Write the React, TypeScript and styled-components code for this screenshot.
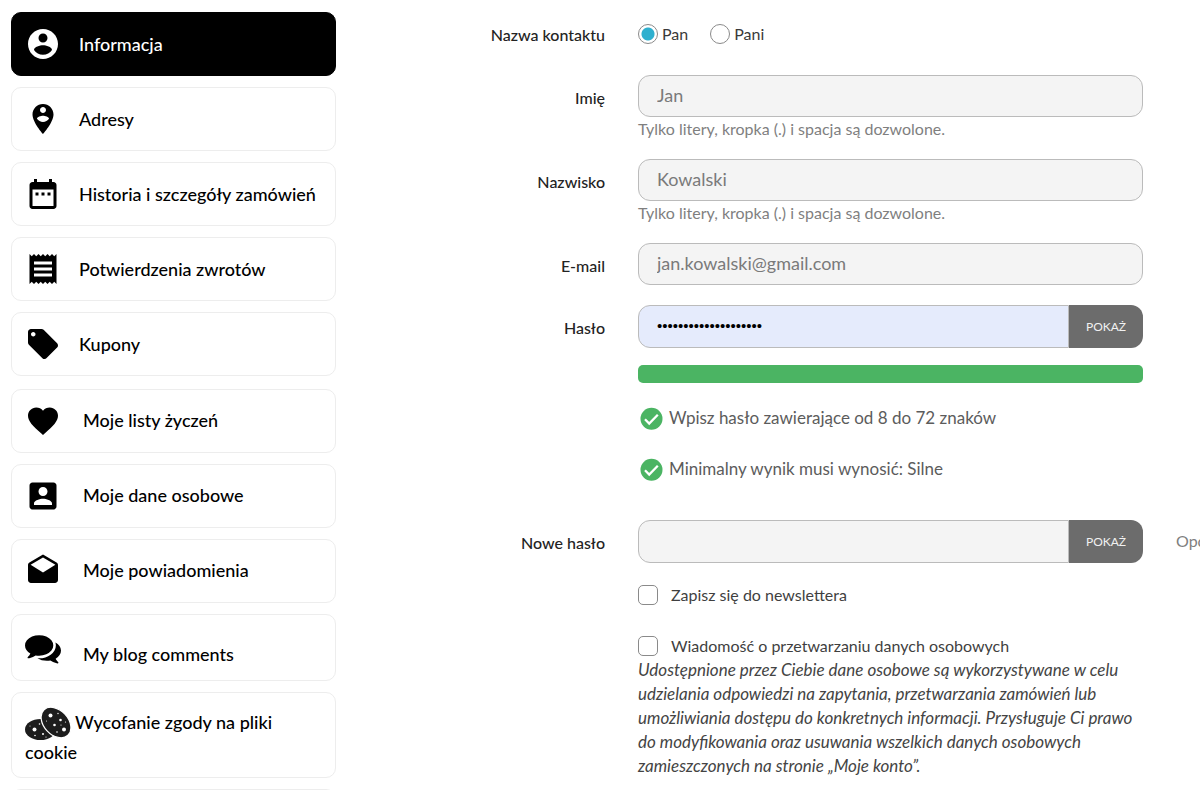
import React from 'react';
import styled, { createGlobalStyle, css } from 'styled-components';

const GlobalStyle = createGlobalStyle`
  *, *::before, *::after { box-sizing: border-box; }
  body {
    margin: 0;
    background: #fff;
    color: #333;
    font-family: Lato, "Open Sans", sans-serif;
    font-size: 16px;
    line-height: 24px;
  }
`;

const Page = styled.div`
  display: flex;
  align-items: flex-start;
  height: 100vh;
  padding-top: 12px;
  padding-left: 11px;
  overflow: hidden;
`;

/* ---------- Account navigation ---------- */

const Sidebar = styled.nav`
  flex: 0 0 325px;
  display: flex;
  flex-direction: column;
  gap: 13px;
`;

const LinkGroup = styled.ul`
  list-style: none;
  margin: 0;
  padding: 0;
  display: flex;
  flex-direction: column;
  gap: 11px;
`;

const cardLook = css<{ $active?: boolean }>`
  min-height: 64px;
  padding: 13px;
  border: 1px solid ${p => (p.$active ? '#000' : '#ededed')};
  border-radius: 10px;
  background: ${p => (p.$active ? '#000' : '#fff')};
  color: ${p => (p.$active ? '#fff' : '#000')};
  font-size: 18px;
  font-weight: 500;
  text-decoration: none;
`;

const LinkCard = styled.a<{ $active?: boolean; $gap?: number }>`
  ${cardLook}
  display: flex;
  align-items: center;
  gap: ${p => p.$gap ?? 18}px;
`;

const ModuleText = styled.span`
  padding-bottom: 3px;
`;

const CommentsCard = styled(LinkCard)`
  align-items: flex-end;
  min-height: 67px;
  padding: 14px 13px;
`;

const CookieCard = styled.a`
  ${cardLook}
  display: block;
  padding: 14px 13px 10px;
  line-height: 30px;

  svg {
    vertical-align: middle;
    margin: -4px 4px -4px 0;
  }
`;

const Icon = styled.svg`
  flex: none;
  width: 36px;
  height: 36px;
  fill: currentColor;
`;

/* ---------- Form ---------- */

const Form = styled.form`
  flex: 1;
  min-width: 0;
  padding-top: 10px;
`;

const FormRow = styled.div<{ $space?: number }>`
  display: grid;
  grid-template-columns: 269px minmax(0, 1fr) 24px;
  column-gap: 33px;
  margin-bottom: ${p => p.$space ?? 20}px;
`;

const labelLook = css`
  padding-top: 11px;
  text-align: right;
  font-weight: 500;
  color: #232323;
`;

const Label = styled.label`
  ${labelLook}
`;

const GroupLabel = styled.span`
  ${labelLook}
  padding-top: 1px;
`;

const Field = styled.div`
  grid-column: 2;
  min-width: 0;
`;

const TextInput = styled.input`
  display: block;
  width: 100%;
  height: 42px;
  padding: 0 18px 2px;
  border: 1px solid #bbb;
  border-radius: 12px;
  background: #f4f4f4;
  color: #7a7a7a;
  font: 400 18px Lato, "Open Sans", sans-serif;
  outline: none;
`;

const Help = styled.small`
  display: block;
  margin-bottom: -2px;
  font-size: 16px;
  color: #7f7f7f;
`;

const InputGroup = styled.div`
  display: flex;
`;

const PasswordInput = styled(TextInput)<{ $filled?: boolean }>`
  flex: 1;
  min-width: 0;
  height: 43px;
  border-radius: 12px 0 0 12px;
  font: 400 15px "Liberation Sans", sans-serif;
  ${p => p.$filled && css`
    background: #e5ebfc;
    color: #000;
  `}
`;

const ShowButton = styled.button`
  width: 74px;
  height: 43px;
  padding: 0;
  border: 0;
  border-radius: 0 12px 12px 0;
  background: #6c6c6c;
  color: #f1f1f1;
  font: 400 12px Lato, "Open Sans", sans-serif;
  text-transform: uppercase;
`;

const StrengthBar = styled.div`
  height: 18px;
  margin: 17px 0 23px;
  border-radius: 5px;
  background: #4bb463;
`;

const Rules = styled.ul`
  list-style: none;
  margin: 0;
  padding: 0 0 0 1px;
  display: flex;
  flex-direction: column;
  gap: 27px;
`;

const Rule = styled.li`
  display: flex;
  align-items: center;
  gap: 6px;
  font-size: 17px;
  color: #5c5c5c;
`;

const RadioList = styled.div`
  display: flex;
  gap: 22px;
`;

const RadioLabel = styled.label`
  display: flex;
  align-items: center;
  gap: 4px;
  color: #3a3a3a;
`;

const Radio = styled.input`
  appearance: none;
  width: 20px;
  height: 20px;
  margin: 0;
  border: 1px solid #8a8a8a;
  border-radius: 50%;
  background: #fff;

  &:checked {
    background: radial-gradient(circle, #2fb0cf 0 6px, #fff 7px);
  }
`;

const CheckLabel = styled.label`
  display: flex;
  align-items: center;
  gap: 13px;
  color: #3f3f3f;
`;

const Checkbox = styled.input`
  appearance: none;
  flex: none;
  width: 20px;
  height: 20px;
  margin: 0;
  border: 1px solid #8a8a8a;
  border-radius: 5px;
  background: #fff;
`;

const Consent = styled.em`
  display: block;
  font-size: 17px;
  color: #444;
`;

const SideNote = styled.span`
  padding-top: 9px;
  color: #7f7f7f;
  white-space: nowrap;
  overflow: hidden;
`;

/* ---------- Drawings ---------- */

const paths = {
  account:
    'M12 2C6.48 2 2 6.48 2 12s4.48 10 10 10 10-4.48 10-10S17.52 2 12 2zm0 3c1.66 0 3 1.34 3 3s-1.34 3-3 3-3-1.34-3-3 1.34-3 3-3zm0 14.2c-2.5 0-4.71-1.28-6-3.22.03-1.99 4-3.08 6-3.08 1.99 0 5.97 1.09 6 3.08-1.29 1.94-3.5 3.22-6 3.22z',
  address:
    'M12 2C8.14 2 5 5.14 5 9c0 5.25 7 13 7 13s7-7.75 7-13c0-3.86-3.14-7-7-7zm0 2c1.1 0 2 .9 2 2 0 1.11-.9 2-2 2s-2-.89-2-2c0-1.1.9-2 2-2zm0 10c-1.67 0-3.14-.85-4-2.15.02-1.32 2.67-2.05 4-2.05s3.98.73 4 2.05c-.86 1.3-2.33 2.15-4 2.15z',
  history:
    'M9 11H7v2h2v-2zm4 0h-2v2h2v-2zm4 0h-2v2h2v-2zm2-7h-1V2h-2v2H8V2H6v2H5c-1.11 0-1.99.9-1.99 2L3 20c0 1.1.89 2 2 2h14c1.1 0 2-.9 2-2V6c0-1.1-.9-2-2-2zm0 16H5V9h14v11z',
  receipt:
    'M18 17H6v-2h12v2zm0-4H6v-2h12v2zm0-4H6V7h12v2zM3 22l1.5-1.5L6 22l1.5-1.5L9 22l1.5-1.5L12 22l1.5-1.5L15 22l1.5-1.5L18 22l1.5-1.5L21 22V2l-1.5 1.5L18 2l-1.5 1.5L15 2l-1.5 1.5L12 2l-1.5 1.5L9 2 7.5 3.5 6 2 4.5 3.5 3 2v20z',
  tag:
    'M21.41 11.58l-9-9C12.05 2.22 11.55 2 11 2H4c-1.1 0-2 .9-2 2v7c0 .55.22 1.05.59 1.42l9 9c.36.36.86.58 1.41.58.55 0 1.05-.22 1.41-.59l7-7c.37-.36.59-.86.59-1.41 0-.55-.23-1.06-.59-1.42zM5.5 7C4.67 7 4 6.33 4 5.5S4.67 4 5.5 4 7 4.67 7 5.5 6.33 7 5.5 7z',
  heart:
    'M12 21.35l-1.45-1.32C5.4 15.36 2 12.28 2 8.5 2 5.42 4.42 3 7.5 3c1.74 0 3.41.81 4.5 2.09C13.09 3.81 14.76 3 16.5 3 19.58 3 22 5.42 22 8.5c0 3.78-3.4 6.86-8.55 11.54L12 21.35z',
  personal:
    'M3 5v14c0 1.1.89 2 2 2h14c1.1 0 2-.9 2-2V5c0-1.1-.9-2-2-2H5c-1.11 0-2 .9-2 2zm12 4c0 1.66-1.34 3-3 3s-3-1.34-3-3 1.34-3 3-3 3 1.34 3 3zm-9 8c0-2 4-3.1 6-3.1s6 1.1 6 3.1v1H6v-1z',
  envelope:
    'M21.99 8c0-.72-.37-1.35-.94-1.7L12 1 2.95 6.3C2.38 6.65 2 7.28 2 8v10c0 1.1.9 2 2 2h16c1.1 0 2-.9 2-2l-.01-10zM12 13L3.74 7.84 12 3l8.26 4.84L12 13z',
};

const Glyph = ({ name }: { name: keyof typeof paths }) => (
  <Icon viewBox="0 0 24 24" aria-hidden="true">
    <path d={paths[name]} />
  </Icon>
);

const CommentsIcon = () => (
  <Icon viewBox="0 0 1792 1792" aria-hidden="true">
    <path d="M1408 768q0 139-94 257t-256.5 186.5-353.5 68.5q-86 0-176-16-124 88-278 128-36 9-86 16h-3q-11 0-20.5-8t-11.5-21q-1-3-1-6.500t.5-6.500 2-6l2.500-5 3.500-5.500 4-5 4.500-5 4-4.500q5-6 23-25t26-29.500 22.500-29 25-38.500 20.500-44q-124-72-195-177t-71-224q0-139 94-257t256.500-186.500 353.500-68.500 353.500 68.500 256.500 186.500 94 257zm384 256q0 120-71 224.500t-195 176.500q10 24 20.500 44t25 38.500 22.500 29 26 29.500 23 25q1 1 4 4.500t4.500 5 4 5 3.500 5.500l2.500 5 2 6 .5 6.500-1 6.500q-3 14-13 22t-22 7q-50-7-86-16-154-40-278-128-90 16-176 16-271 0-472-132 58 4 88 4 161 0 309-45t264-129q125-92 192-212t67-254q0-77-23-152 129 71 204 178t75 230z" />
  </Icon>
);

const CookieIcon = () => (
  <svg width="46" height="34" viewBox="0 0 46 34" aria-hidden="true">
    <ellipse cx="15.5" cy="22.500" rx="15.5" ry="10.500" fill="#1d1d1d" />
    <g fill="#fff">
      <circle cx="9.500" cy="22.500" r="2" />
      <circle cx="18" cy="27" r="1" />
      <circle cx="10" cy="28.500" r=".8" />
      <circle cx="14.500" cy="17" r=".8" />
      <circle cx="5" cy="19" r=".5" />
      <circle cx="21" cy="30" r=".6" />
    </g>
    <ellipse cx="31" cy="15.500" rx="17.500" ry="12.200" transform="rotate(47 31 15.5)" fill="#1d1d1d" stroke="#fff" strokeWidth="1.200" />
    <g fill="#fff">
      <circle cx="25.500" cy="8.500" r="2" />
      <circle cx="39" cy="22.500" r="2" />
      <circle cx="29.500" cy="18" r="1.300" />
      <circle cx="35.500" cy="13" r="1.300" />
      <circle cx="32" cy="25" r=".8" />
      <circle cx="33" cy="6.500" r=".7" />
      <circle cx="21.500" cy="14" r=".5" />
      <circle cx="40.500" cy="15" r=".6" />
      <circle cx="36" cy="18" r=".6" />
    </g>
  </svg>
);

const CheckMark = () => (
  <svg width="24" height="24" viewBox="0 0 24 24" aria-hidden="true">
    <circle cx="12.500" cy="12.800" r="11" fill="#4bb463" />
    <path d="M6 13.300l4.200 4.200 8.600-8.800" fill="none" stroke="#fff" strokeWidth="2.300" />
  </svg>
);

const mainLinks: { icon: keyof typeof paths; text: string }[] = [
  { icon: 'account', text: 'Informacja' },
  { icon: 'address', text: 'Adresy' },
  { icon: 'history', text: 'Historia i szczegóły zamówień' },
  { icon: 'receipt', text: 'Potwierdzenia zwrotów' },
  { icon: 'tag', text: 'Kupony' },
];

const moduleLinks: { icon: keyof typeof paths; text: string }[] = [
  { icon: 'heart', text: 'Moje listy życzeń' },
  { icon: 'personal', text: 'Moje dane osobowe' },
  { icon: 'envelope', text: 'Moje powiadomienia' },
];

export default function App() {
  return (
    <>
      <GlobalStyle />
      <Page>
        <Sidebar>
          <LinkGroup>
            {mainLinks.map((link, i) => (
              <li key={link.icon}>
                <LinkCard href="#" $active={i === 0}>
                  <Glyph name={link.icon} />
                  {link.text}
                </LinkCard>
              </li>
            ))}
          </LinkGroup>
          <LinkGroup>
            {moduleLinks.map(link => (
              <li key={link.icon}>
                <LinkCard href="#" $gap={22}>
                  <Glyph name={link.icon} />
                  <ModuleText>{link.text}</ModuleText>
                </LinkCard>
              </li>
            ))}
            <li>
              <CommentsCard href="#" $gap={22}>
                <CommentsIcon />
                My blog comments
              </CommentsCard>
            </li>
            <li>
              <CookieCard href="#">
                <CookieIcon />
                Wycofanie zgody na pliki cookie
              </CookieCard>
            </li>
            <li>
              <LinkCard as="div" />
            </li>
          </LinkGroup>
        </Sidebar>

        <Form onSubmit={e => e.preventDefault()}>
          <FormRow $space={28} role="radiogroup" aria-labelledby="title-label">
            <GroupLabel id="title-label">Nazwa kontaktu</GroupLabel>
            <Field>
              <RadioList>
                <RadioLabel>
                  <Radio type="radio" name="title" defaultChecked />
                  Pan
                </RadioLabel>
                <RadioLabel>
                  <Radio type="radio" name="title" />
                  Pani
                </RadioLabel>
              </RadioList>
            </Field>
          </FormRow>

          <FormRow>
            <Label htmlFor="first">Imię</Label>
            <Field>
              <TextInput id="first" type="text" defaultValue="Jan" />
              <Help>Tylko litery, kropka (.) i spacja są dozwolone.</Help>
            </Field>
          </FormRow>

          <FormRow>
            <Label htmlFor="last">Nazwisko</Label>
            <Field>
              <TextInput id="last" type="text" defaultValue="Kowalski" />
              <Help>Tylko litery, kropka (.) i spacja są dozwolone.</Help>
            </Field>
          </FormRow>

          <FormRow>
            <Label htmlFor="email">E-mail</Label>
            <Field>
              <TextInput id="email" type="email" defaultValue="jan.kowalski@gmail.com" />
            </Field>
          </FormRow>

          <FormRow $space={39}>
            <Label htmlFor="password">Hasło</Label>
            <Field>
              <InputGroup>
                <PasswordInput id="password" type="password" $filled defaultValue="abcdefghijklmnopqrst" />
                <ShowButton type="button">Pokaż</ShowButton>
              </InputGroup>
              <StrengthBar />
              <Rules>
                <Rule>
                  <CheckMark />
                  Wpisz hasło zawierające od 8 do 72 znaków
                </Rule>
                <Rule>
                  <CheckMark />
                  Minimalny wynik musi wynosić: Silne
                </Rule>
              </Rules>
            </Field>
          </FormRow>

          <FormRow>
            <Label htmlFor="new-password">Nowe hasło</Label>
            <Field>
              <InputGroup>
                <PasswordInput id="new-password" type="password" />
                <ShowButton type="button">Pokaż</ShowButton>
              </InputGroup>
            </Field>
            <SideNote>Opcjonalne</SideNote>
          </FormRow>

          <FormRow $space={27}>
            <Field>
              <CheckLabel>
                <Checkbox type="checkbox" />
                Zapisz się do newslettera
              </CheckLabel>
            </Field>
          </FormRow>

          <FormRow>
            <Field>
              <CheckLabel>
                <Checkbox type="checkbox" />
                Wiadomość o przetwarzaniu danych osobowych
              </CheckLabel>
              <Consent>
                Udostępnione przez Ciebie dane osobowe są wykorzystywane w celu udzielania odpowiedzi na
                zapytania, przetwarzania zamówień lub umożliwiania dostępu do konkretnych informacji.
                Przysługuje Ci prawo do modyfikowania oraz usuwania wszelkich danych osobowych
                zamieszczonych na stronie „Moje konto”.
              </Consent>
            </Field>
          </FormRow>
        </Form>
      </Page>
    </>
  );
}
